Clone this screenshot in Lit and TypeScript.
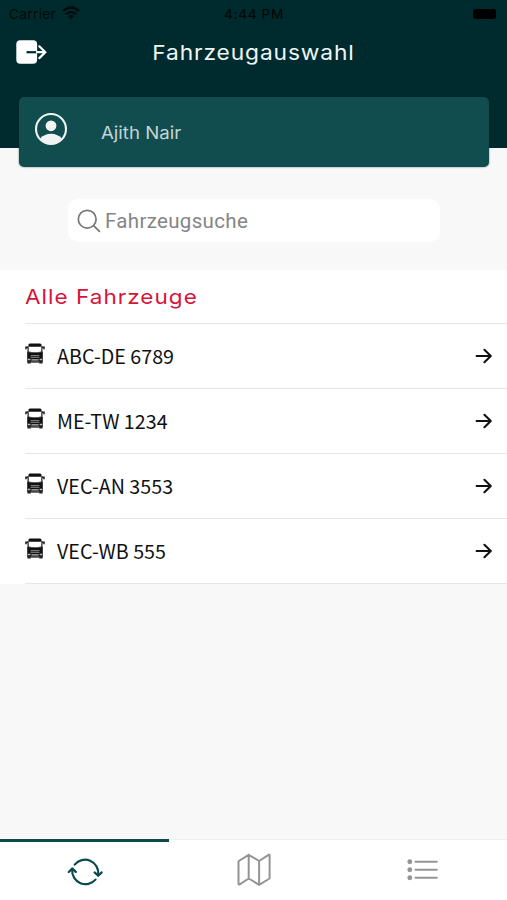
import { LitElement, html, css, svg } from "lit";
import { customElement, property } from "lit/decorators.js";

const truck = svg`
  <path d="M3.6 1.6Q3.8.4 5.4.4H14.6Q16.2.4 16.4 1.6L17.2 9.5H2.8Z" fill="#111"/>
  <path d="M3.6 3.8H16.4L16.6 8.6Q10 9.6 3.4 8.6Z" fill="#fff"/>
  <path d="M3 3.2V9.6M17 3.2V9.6" stroke="#222" stroke-width="1"/>
  <path d="M3 4.3H1V6.2M17 4.3H19V6.2" fill="none" stroke="#222" stroke-width="1.6"/>
  <path d="M2.2 9.1Q10 10.6 17.8 9.1V18.8H2.2Z" fill="#111"/>
  <path d="M5.6 12.6H14.4M5.6 14.3H14.4" stroke="#888" stroke-width="1"/>
  <path d="M2.8 16.5H5.4M14.6 16.5H17.2M6.4 16.8H13.6" stroke="#bbb" stroke-width="1.3"/>
  <path d="M2.4 18H5.8V20.6H2.4ZM14.2 18H17.6V20.6H14.2Z" fill="#222"/>
  <path d="M5.6 19.2H14.4" stroke="#444" stroke-width="1.1"/>`;

@customElement("vehicle-row")
export class VehicleRow extends LitElement {
  @property() plate = "";

  static styles = css`
    :host {
      display: flex;
      align-items: center;
      box-sizing: border-box;
      height: 65.2px;
      margin-left: 25px;
      padding-right: 14px;
      border-bottom: 1px solid #e6e6e6;
    }
    .truck { width: 21px; height: 21px; margin: -5px 11px 0 0; flex: none; }
    .plate {
      flex: 1;
      font: 400 19.7px/28px "Noto Sans CJK SC", sans-serif;
      color: #111;
    }
    .arrow { width: 18px; height: 18px; flex: none; margin-top: 0.5px; }
  `;

  render() {
    return html`
      <svg class="truck" viewBox="0 0 21 21">${truck}</svg>
      <span class="plate">${this.plate}</span>
      <svg class="arrow" viewBox="0 0 18 18" fill="none" stroke="#111" stroke-width="2.1" stroke-linecap="round" stroke-linejoin="round">
        <path d="M1.6 9H15.6M9.4 2.8L15.8 9L9.4 15.2" />
      </svg>
    `;
  }
}

@customElement("app-root")
export class AppRoot extends LitElement {
  private vehicles = ["ABC-DE 6789", "ME-TW 1234", "VEC-AN 3553", "VEC-WB 555"];

  static styles = css`
    :host {
      display: flex;
      flex-direction: column;
      height: 900px;
      background: #f8f8f8;
      font-family: Inter, "Liberation Sans", sans-serif;
      overflow: hidden;
    }
    .header { height: 147.5px; flex: none; background: #002b2e; }
    .status {
      display: grid;
      grid-template-columns: 1fr 1fr 1fr;
      align-items: center;
      height: 27px;
      padding: 0 11px 0 9px;
      font-size: 13.5px;
      color: #00090a;
    }
    .carrier { display: flex; align-items: center; gap: 6px; letter-spacing: 0.4px; }
    .wifi { width: 18px; height: 14px; margin-top: -1px; }
    .time { text-align: center; font-weight: 500; letter-spacing: 0.65px; padding-left: 3px; }
    .battery { justify-self: end; width: 23px; height: 10px; border-radius: 2.5px; background: #000; }
    .nav { display: grid; grid-template-columns: 60px 1fr 60px; align-items: center; height: 50px; }
    .logout { width: 32px; height: 26px; margin-left: 16px; }
    .title, .heading, .user { transform: scaleX(1.11); white-space: nowrap; }
    .title { text-align: center; font-size: 20.5px; letter-spacing: 0.8px; color: #eef6f6; }
    .heading, .user { transform-origin: left; }
    .card {
      display: flex;
      align-items: center;
      box-sizing: border-box;
      height: 69.5px;
      margin: -50.5px 18px 0 19px;
      padding-left: 15px;
      flex: none;
      background: #114d4f;
      border-radius: 5px;
      box-shadow: 0 0 2px rgba(0, 20, 24, 0.6);
    }
    .avatar { width: 34px; height: 34px; margin: -5px 33px 0 0; }
    .user { font-size: 16.8px; color: #c2d6d6; padding-top: 2px; }
    .search {
      display: flex;
      align-items: center;
      box-sizing: border-box;
      height: 43px;
      margin: 32.5px 67px 28px 68px;
      padding-left: 9px;
      gap: 4px;
      flex: none;
      border-radius: 10px;
      background: #fff;
      font-family: Roboto, sans-serif;
      font-size: 20.5px;
      letter-spacing: 0.33px;
      color: #858585;
    }
    .lens { width: 24px; height: 24px; }
    .list { background: #fff; flex: none; }
    .section {
      display: flex;
      align-items: center;
      box-sizing: border-box;
      height: 53.5px;
      margin-left: 25px;
      border-bottom: 1px solid #e6e6e6;
      font-size: 20.3px;
      letter-spacing: 0.92px;
      color: #d71438;
    }
    .tabs {
      display: grid;
      grid-template-columns: repeat(3, 1fr);
      height: 61px;
      margin-top: auto;
      background: #fff;
    }
    .tab {
      display: flex;
      justify-content: center;
      align-items: center;
      border-top: 1px solid #efefef;
      color: #949494;
    }
    .tab.active { border-top: 3px solid #0c4b4d; color: #0c4b4d; }
    .tab svg { width: 36px; height: 36px; }
  `;

  render() {
    return html`
      <div class="header">
        <div class="status">
          <span class="carrier">Carrier
            <svg class="wifi" viewBox="0 0 18 14" fill="none" stroke="#000c0d" stroke-width="2.4">
              <path d="M1 5.2Q9-2.2 17 5.2M4 8.2Q9 3.6 14 8.2" />
              <path d="M6 10.3Q9 7.8 12 10.3L9 13.2Z" fill="#000c0d" stroke="none" />
            </svg>
          </span>
          <span class="time">4:44 PM</span>
          <span class="battery"></span>
        </div>
        <div class="nav">
          <svg class="logout" viewBox="0 0 32 26">
            <rect x="0.3" y="1.3" width="20.8" height="23.4" rx="4" fill="#fff" />
            <path d="M10.5 13.2H22" stroke="#002b2e" stroke-width="2.2" />
            <path d="M21 13.2H29M23.3 7.3L29.3 13.2L23.3 19.1" fill="none" stroke="#fff" stroke-width="2.2" stroke-linecap="round" />
          </svg>
          <span class="title">Fahrzeugauswahl</span>
        </div>
      </div>
      <div class="card">
        <svg class="avatar" viewBox="0 0 34 34">
          <circle cx="17" cy="17" r="15" fill="none" stroke="#eff4f2" stroke-width="2.1" />
          <circle cx="17" cy="13.8" r="5.4" fill="#eff4f2" />
          <path d="M6.3 26.3Q10.6 21.7 17 21.7T27.7 26.3Q23.3 31.8 17 31.8T6.3 26.3Z" fill="#eff4f2" />
        </svg>
        <span class="user">Ajith Nair</span>
      </div>
      <div class="search">
        <svg class="lens" viewBox="0 0 24 24" fill="none" stroke="#777" stroke-width="1.7" stroke-linecap="round">
          <circle cx="10.2" cy="10.2" r="8.9" />
          <path d="M16.6 16.6L22.4 22.4" />
        </svg>
        <span>Fahrzeugsuche</span>
      </div>
      <div class="list">
        <div class="section"><span class="heading">Alle Fahrzeuge</span></div>
        ${this.vehicles.map((v) => html`<vehicle-row .plate=${v}></vehicle-row>`)}
      </div>
      <div class="tabs">
        <div class="tab active">
          <svg viewBox="0 0 36 36" fill="none" stroke="currentColor" stroke-width="2.2" stroke-linecap="round" stroke-linejoin="round">
            <path d="M7.7 11.6A13.3 13.3 0 0 1 31.2 21.6M28.5 26.6A13.3 13.3 0 0 1 5.2 17" />
            <path d="M27.6 19.4L31.2 22.8L34.6 19.4M1.8 18.9L5.2 15.4L8.8 18.9" />
          </svg>
        </div>
        <div class="tab">
          <svg viewBox="0 0 36 36" fill="none" stroke="currentColor" stroke-width="2" stroke-linecap="round" stroke-linejoin="round">
            <path d="M2.8 9L12.7 2.8L23.1 9L32.6 2.8Q33.6 2.4 33.6 3.6V26.5L23.1 32.8L12.7 26.5L3.8 32.3Q2.5 33 2.5 31.8V9.6M12.7 2.8V26.5M23.1 9V32.8" />
          </svg>
        </div>
        <div class="tab">
          <svg viewBox="0 0 36 36" stroke="currentColor" fill="currentColor" stroke-width="1.9" stroke-linecap="round">
            <path d="M10.4 9.7H31.8M10.4 17.7H31.8M10.4 25.7H31.8" />
            <circle cx="4.8" cy="9.7" r="1.5" />
            <circle cx="4.8" cy="17.7" r="1.5" />
            <circle cx="4.8" cy="25.7" r="1.5" />
          </svg>
        </div>
      </div>
    `;
  }
}
